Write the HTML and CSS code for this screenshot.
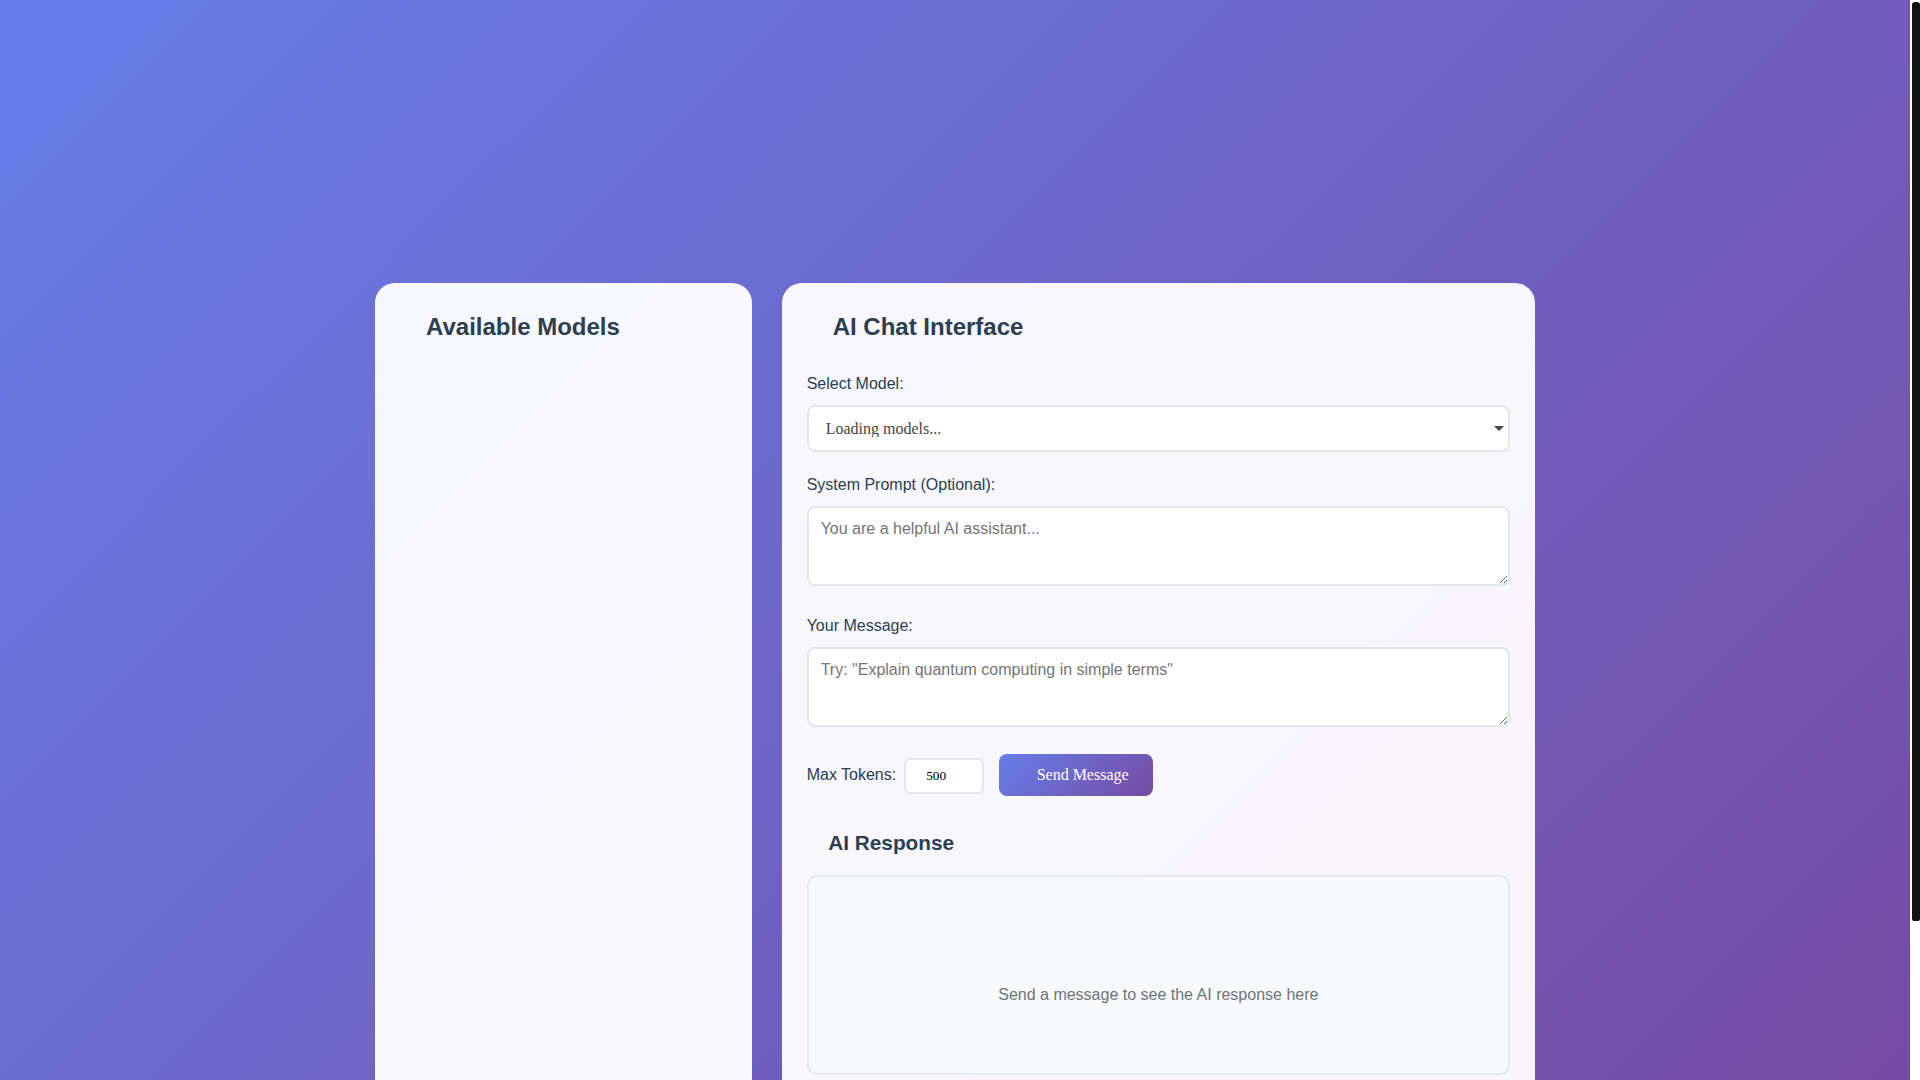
FILE: index.html
```html
<!DOCTYPE html>
<html lang="en">
<head>
<meta charset="utf-8">
<title>AI Chat Interface</title>
<link rel="stylesheet" href="styles.css">
</head>
<body>
<div class="shell">
  <div class="app">
    <div class="page">
      <div class="hero"></div>
      <div class="layout">
        <aside class="card models-card">
          <h2 class="card-title"><span class="ico"></span>Available Models</h2>
        </aside>
        <main class="card chat-card">
          <h2 class="card-title"><span class="ico"></span>AI Chat Interface</h2>
          <div class="field">
            <label class="field-label" for="model">Select Model:</label>
            <select id="model" class="select"><option>Loading models...</option></select>
          </div>
          <div class="field">
            <label class="field-label" for="system">System Prompt (Optional):</label>
            <textarea id="system" class="textarea" placeholder="You are a helpful AI assistant..."></textarea>
          </div>
          <div class="field">
            <label class="field-label" for="message">Your Message:</label>
            <textarea id="message" class="textarea" placeholder="Try: &quot;Explain quantum computing in simple terms&quot;"></textarea>
          </div>
          <div class="controls"><label class="tokens-label">Max Tokens: <input class="tokens" type="number" value="500"></label><button class="send-btn" type="button"><span class="btn-ico"></span>Send Message</button></div>
          <section class="response">
            <h3 class="response-title"><span class="ico-sm"></span>AI Response</h3>
            <div class="response-box">
              <p class="empty-state">Send a message to see the AI response here</p>
            </div>
          </section>
        </main>
      </div>
    </div>
  </div>
  <div class="rail" aria-hidden="true"><div class="rail-thumb"></div></div>
</div>
</body>
</html>
```
FILE: styles.css
```css
html,
body {
  height: 100%;
  overflow: hidden;
}
body {
  margin: 0;
  font-family: "Liberation Sans", Arial, sans-serif;
  font-size: 16px;
  line-height: 1.6;
  color: #2c3e50;
}
.shell {
  display: flex;
  height: 100vh;
}
.app {
  flex: 1;
  min-width: 0;
  overflow: hidden;
  background: linear-gradient(135deg, #667eea 0%, #764ba2 100%);
}
.rail {
  width: 10px;
  flex: none;
  background: #ffffff;
  padding-top: 2px;
  box-sizing: border-box;
}
.rail-thumb {
  height: 919px;
  margin-left: 2px;
  background: #111111;
  border-radius: 3px 3px 2px 2px;
}
.page {
  max-width: 1200px;
  margin: 0 auto;
  padding: 20px 20px 171px;
  box-sizing: border-box;
}
.hero {
  height: 233px;
  margin-bottom: 30px;
}
.layout {
  display: grid;
  grid-template-columns: 1fr 2fr;
  gap: 30px;
}
.card {
  background: rgba(255, 255, 255, 0.95);
  border-radius: 20px;
  padding: 25px;
}
.card-title {
  margin: 0 0 25px;
  font-size: 24px;
  font-weight: 700;
  color: #2c3e50;
}
.ico {
  display: inline-block;
  width: 26px;
}
.ico-sm {
  display: inline-block;
  width: 21.5px;
}
.field {
  margin-bottom: 20px;
}
.field-label {
  display: block;
  margin-bottom: 8px;
  font-weight: 500;
  color: #2c3e50;
}
.select {
  width: 100%;
  height: 47px;
  box-sizing: border-box;
  padding: 0 17px;
  border: 2px solid #e3e7ec;
  border-radius: 8px;
  -webkit-appearance: none;
  appearance: none;
  background-color: #ffffff;
  background-image: url("data:image/svg+xml,%3Csvg xmlns='http://www.w3.org/2000/svg' width='10' height='5' viewBox='0 0 10 5'%3E%3Cpath d='M0 0h10L5 5z' fill='%23444'/%3E%3C/svg%3E");
  background-repeat: no-repeat;
  background-position: right 4px center;
  background-size: 10px 5px;
  font-family: "Liberation Serif", "Times New Roman", serif;
  font-size: 16px;
  color: #444;
}
.textarea {
  width: 100%;
  height: 80px;
  box-sizing: border-box;
  padding: 12px;
  border: 2px solid #e3e7ec;
  border-radius: 8px;
  background: #ffffff;
  font-family: "Liberation Sans", Arial, sans-serif;
  font-size: 16px;
  color: #2c3e50;
}
.controls {
  margin-top: 6px;
}
.tokens-label {
  color: #2c3e50;
}
.tokens {
  width: 80px;
  margin-left: 3px;
  box-sizing: border-box;
  padding: 8px;
  border: 2px solid #e3e7ec;
  border-radius: 6px;
  background: #ffffff;
  font-family: "Liberation Serif", "Times New Roman", serif;
  font-size: 13.33px;
  text-align: center;
  color: #000;
}
.send-btn {
  margin-left: 15px;
  padding: 12px 24px;
  border: none;
  border-radius: 8px;
  background: linear-gradient(135deg, #667eea 0%, #764ba2 100%);
  color: #ffffff;
  font-family: "Liberation Serif", "Times New Roman", serif;
  font-size: 16px;
  cursor: pointer;
}
.btn-ico {
  display: inline-block;
  width: 14px;
}
.response {
  margin-top: 30px;
}
.response-title {
  margin: 0 0 15px;
  font-size: 20.8px;
  font-weight: 700;
  color: #2c3e50;
}
.response-box {
  min-height: 200px;
  box-sizing: border-box;
  padding: 20px;
  border: 2px solid #e6e9ed;
  border-radius: 10px;
  background: #f8f9fa;
}
.empty-state {
  margin: 0;
  padding-top: 85px;
  text-align: center;
  color: #6c757d;
}
```
